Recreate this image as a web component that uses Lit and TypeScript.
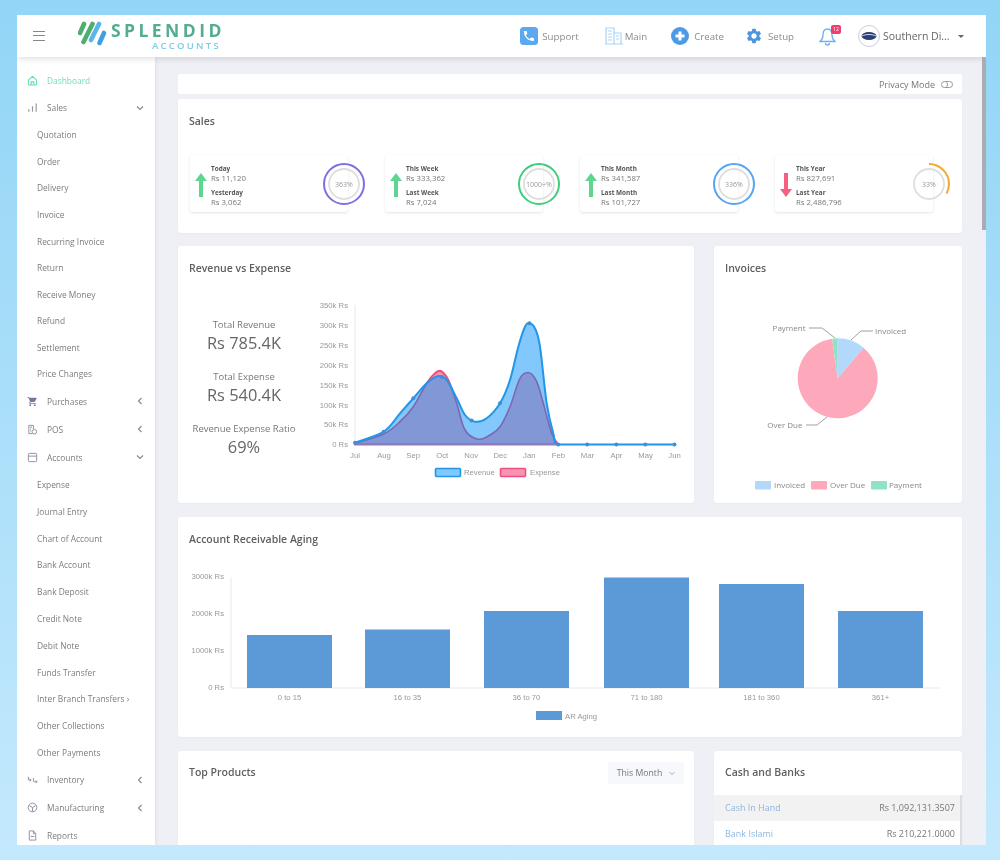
import { LitElement, html, css, svg } from "lit";
import { customElement } from "lit/decorators.js";

const ic = (body: unknown, cls = "sico", vb = "0 0 24 24") =>
  html`<svg class=${cls} viewBox=${vb}>${body}</svg>`;

const PHONE = "M6.62 10.79c1.44 2.83 3.76 5.14 6.59 6.59l2.2-2.2c.27-.27.67-.36 1.02-.24 1.12.37 2.33.57 3.57.57.55 0 1 .45 1 1V20c0 .55-.45 1-1 1-9.39 0-17-7.61-17-17 0-.55.45-1 1-1h3.5c.55 0 1 .45 1 1 0 1.25.2 2.45.57 3.57.11.35.03.74-.25 1.02l-2.2 2.2z";
const GEAR = "M19.14 12.94c.04-.3.06-.61.06-.94 0-.32-.02-.64-.07-.94l2.03-1.58c.18-.14.23-.41.12-.61l-1.92-3.32c-.12-.22-.37-.29-.59-.22l-2.39.96c-.5-.38-1.03-.7-1.62-.94l-.36-2.54c-.04-.24-.24-.41-.48-.41h-3.84c-.24 0-.43.17-.47.41l-.36 2.54c-.59.24-1.13.57-1.62.94l-2.39-.96c-.22-.08-.47 0-.59.22L2.74 8.87c-.12.21-.08.47.12.61l2.03 1.58c-.05.3-.09.63-.09.94s.02.64.07.94l-2.03 1.58c-.18.14-.23.41-.12.61l1.92 3.32c.12.22.37.29.59.22l2.39-.96c.5.38 1.03.7 1.62.94l.36 2.54c.05.24.24.41.48.41h3.84c.24 0 .44-.17.47-.41l.36-2.54c.59-.24 1.13-.56 1.62-.94l2.39.96c.22.08.47 0 .59-.22l1.92-3.32c.12-.22.07-.47-.12-.61l-2.01-1.58zM12 15.6c-1.98 0-3.6-1.62-3.6-3.6s1.62-3.6 3.6-3.6 3.6 1.62 3.6 3.6-1.62 3.6-3.6 3.6z";
const CART = "M7 18c-1.1 0-1.99.9-1.99 2S5.9 22 7 22s2-.9 2-2-.9-2-2-2zM1 2v2h2l3.6 7.59-1.35 2.45c-.16.28-.25.61-.25.96 0 1.1.9 2 2 2h12v-2H7.42c-.14 0-.25-.11-.25-.25l.03-.12.9-1.63h7.45c.75 0 1.41-.41 1.75-1.03l3.58-6.49c.08-.14.12-.31.12-.48 0-.55-.45-1-1-1H5.21l-.94-2H1zm16 16c-1.1 0-1.99.9-1.99 2s.89 2 1.99 2 2-.9 2-2-.9-2-2-2z";

const ICONS: Record<string, unknown> = {
  home: svg`<path d="M3 11 12 3l9 8v9a2 2 0 0 1-2 2H5a2 2 0 0 1-2-2z M9 22v-7h6v7" fill="none" stroke="#5fdcae" stroke-width="2.2" stroke-linejoin="round"/>`,
  bars: svg`<path d="M4 21v-5M12 21V9M20 21V3" fill="none" stroke="#999" stroke-width="2.6"/>`,
  cart: svg`<path d=${CART} fill="#77779a"/>`,
  pos: svg`<path d="M4 21V3h10v8M4 21h7M7 7h4M7 11h2M7 15h2" fill="none" stroke="#8a8a9c" stroke-width="2"/><circle cx="16" cy="17" r="5" fill="none" stroke="#8a8a9c" stroke-width="2"/>`,
  acc: svg`<rect x="3" y="3" width="18" height="18" rx="2" fill="none" stroke="#8a8a9c" stroke-width="2"/><path d="M3 9h18" stroke="#8a8a9c" stroke-width="2"/>`,
  inv: svg`<path d="M3 6v7h6M6 10l3 3-3 3M14 9v6a2 2 0 0 0 2 2h6M19 14l3 3-3 3" fill="none" stroke="#8a8a9c" stroke-width="2"/>`,
  man: svg`<circle cx="12" cy="12" r="9.5" fill="none" stroke="#8a8a9c" stroke-width="2"/><path d="M5 8l7 4 7-4M12 12v9" fill="none" stroke="#8a8a9c" stroke-width="2"/>`,
  rep: svg`<path d="M5 2h9l5 6v14H5z M14 2v6h5 M8 14h8" fill="none" stroke="#8a8a9c" stroke-width="2" stroke-linejoin="round"/>`,
};

type Row = { t: string; k: "top" | "sub" | "sub2"; i?: string; c?: "d" | "l" };
const MENU: Row[] = [
  { t: "Dashboard", k: "top", i: "home" },
  { t: "Sales", k: "top", i: "bars", c: "d" },
  ...["Quotation", "Order", "Delivery", "Invoice", "Recurring Invoice", "Return", "Receive Money", "Refund", "Settlement", "Price Changes"].map((t) => ({ t, k: "sub" as const })),
  { t: "Purchases", k: "top", i: "cart", c: "l" },
  { t: "POS", k: "top", i: "pos", c: "l" },
  { t: "Accounts", k: "top", i: "acc", c: "d" },
  ...["Expense", "Journal Entry", "Chart of Account", "Bank Account", "Bank Deposit", "Credit Note", "Debit Note", "Funds Transfer", "Inter Branch Transfers ›", "Other Collections", "Other Payments"].map((t) => ({ t, k: "sub2" as const })),
  { t: "Inventory", k: "top", i: "inv", c: "l" },
  { t: "Manufacturing", k: "top", i: "man", c: "l" },
  { t: "Reports", k: "top", i: "rep" },
];

const STATS = [
  { a: "Today", av: "Rs 11,120", b: "Yesterday", bv: "Rs 3,062", up: true, pct: "363%", col: "#7f6fe0", dash: 100 },
  { a: "This Week", av: "Rs 333,362", b: "Last Week", bv: "Rs 7,024", up: true, pct: "1000+%", col: "#3fce7c", dash: 100 },
  { a: "This Month", av: "Rs 341,587", b: "Last Month", bv: "Rs 101,727", up: true, pct: "336%", col: "#55a6f0", dash: 100 },
  { a: "This Year", av: "Rs 827,691", b: "Last Year", bv: "Rs 2,486,796", up: false, pct: "33%", col: "#f0a92e", dash: 33 },
];

const X0 = 355, XS = 29.05, Y0 = 444.4, YK = 139.4 / 350;
const MONTHS = ["Jul", "Aug", "Sep", "Oct", "Nov", "Dec", "Jan", "Feb", "Mar", "Apr", "May", "Jun"];

const REV_PTS = [[355,442.7],[383.7,431.7],[400,413.3],[413.3,398.3],[426.7,383.3],[438.3,376],[446.7,380],[456.7,398.3],[465,415],[475,421.7],[486.7,418.3],[500,403.3],[510,380],[518.3,346.7],[525,326.7],[529.3,323.3],[535,328.3],[540,346.7],[546.7,403.3],[553.3,433.3],[558.2,444.4],[587.2,444.4],[616.3,444.4],[645.3,444.4],[674.5,444.4]];
const EXP_PTS = [[355,443.3],[383.7,434],[400,421.7],[413.3,406.7],[426.7,383.3],[435,373.3],[440.7,371],[448.3,380],[456.7,403.3],[465,430],[478.3,439.3],[490,435],[500,426.7],[510,406.7],[520,378.3],[529.3,372.7],[536.7,381.7],[543.3,403.3],[551.7,433.3],[558.2,444.4]];
const REV_DOTS = [[355,442.7],[383.7,431.7],[413.3,398.3],[442,377],[471.6,420.5],[500,403.3],[529.3,323.3],[558.2,444.4],[587.2,444.4],[616.3,444.4],[645.3,444.4],[674.5,444.4]];

function curve(p: number[][]): string {
  let d = `M${p[0][0]} ${p[0][1]}`;
  for (let i = 0; i < p.length - 1; i++) {
    const a = p[Math.max(i - 1, 0)], b = p[i], c = p[i + 1], e = p[Math.min(i + 2, p.length - 1)];
    const y1 = Math.min(Y0, b[1] + (c[1] - a[1]) / 6);
    const y2 = Math.min(Y0, c[1] - (e[1] - b[1]) / 6);
    d += `C${b[0] + (c[0] - a[0]) / 6} ${y1} ${c[0] - (e[0] - b[0]) / 6} ${y2} ${c[0]} ${c[1]}`;
  }
  return d;
}
const closed = (p: number[][]) => `${curve(p)}L${p[p.length - 1][0]} ${Y0}L${p[0][0]} ${Y0}Z`;

function polar(a: number) {
  const r = (a * Math.PI) / 180;
  return `${837.7 + 40 * Math.sin(r)} ${378.3 - 40 * Math.cos(r)}`;
}
const slice = (a: number, b: number) =>
  `M837.7 378.3L${polar(a)}A40 40 0 ${b - a > 180 ? 1 : 0} 1 ${polar(b)}Z`;

const BARS = [
  { x: 247, top: 635, l: "0 to 15" },
  { x: 365, top: 629.5, l: "16 to 35" },
  { x: 484, top: 611, l: "36 to 70" },
  { x: 604, top: 577.5, l: "71 to 180" },
  { x: 719, top: 584, l: "181 to 360" },
  { x: 838, top: 611, l: "361+" },
];

@customElement("app-root")
export class AppRoot extends LitElement {
  static styles = css`
    :host { display: block; width: 1000px; height: 860px; overflow: hidden; background: linear-gradient(180deg, #92d5f6 0%, #c4e9fd 100%); font-family: "Open Sans", sans-serif; }
    .page { padding: 15px 14px 15px 17px; height: 830px; }
    .win { position: relative; width: 969px; height: 830px; background: #eef0f6; overflow: hidden; filter: blur(0.55px); }
    .hdr { height: 42px; background: #fff; display: flex; align-items: center; box-shadow: 0 2px 6px rgba(0,0,0,.12); position: relative; z-index: 2; padding-left: 16px; }
    .burger { width: 12px; height: 10px; border-top: 1.3px solid #888; border-bottom: 1.3px solid #888; position: relative; box-sizing: border-box; margin-right: 33px; }
    .burger::after { content: ""; position: absolute; left: 0; right: 0; top: 3px; height: 1.3px; background: #888; }
    .logo { display: flex; align-items: flex-start; height: 42px; }
    .mark { width: 30px; height: 28px; margin-top: 6px; }
    .wm { margin-left: 3px; width: 110px; }
    .w1 { font: 700 17.5px/20px "Open Sans", sans-serif; letter-spacing: 3.45px; color: #54ad90; margin-top: 5px; white-space: nowrap; height: 20px; width: 110px; }
    .w2 { font: 600 9.5px/10px "Open Sans", sans-serif; letter-spacing: 2.25px; color: #7ccbea; margin: 1px 0 0 41px; white-space: nowrap; }
    .nav { margin-left: auto; display: flex; align-items: center; padding-right: 22px; }
    .ni { display: flex; align-items: center; font-size: 9.7px; color: #8b8b8b; }
    .ni svg { width: 18px; height: 18px; display: block; }
    .n1 { gap: 4px; margin-right: 26px; }
    .n2 { gap: 2px; margin-right: 24px; }
    .n3 { gap: 5px; margin-right: 21px; }
    .n4 { gap: 5px; margin-right: 25px; }
    .bell { position: relative; width: 22px; height: 22px; margin-right: 17px; }
    .bell svg { width: 17px; height: 19px; margin-top: 2px; display: block; }
    .bdg { position: absolute; left: 12px; top: 0; width: 10px; height: 9px; background: #ef3f6e; border-radius: 2px; color: #fff; font-size: 5px; line-height: 9px; text-align: center; }
    .av { width: 22px; height: 22px; border-radius: 50%; border: 1px solid #ccd; box-sizing: border-box; margin-right: 3px; display: flex; align-items: center; justify-content: center; }
    .av svg { width: 16px; height: 10px; }
    .co { font-size: 10.5px; color: #666; width: 75px; white-space: nowrap; }
    .car { width: 0; height: 0; border-left: 3px solid transparent; border-right: 3px solid transparent; border-top: 3px solid #666; }
    .body { display: flex; height: 788px; }
    .side { width: 138px; flex: none; background: #fff; padding-top: 10px; box-shadow: 1px 0 4px rgba(0,0,0,.07); overflow: hidden; box-sizing: border-box; }
    .r { display: flex; align-items: center; font-size: 8.4px; color: #7c7c7c; white-space: nowrap; position: relative; }
    .top { height: 28px; padding-left: 10px; }
    .top:first-child { height: 26.6px; color: #6fe0b6; }
    .sub { height: 26.55px; padding-left: 20px; }
    .sub2 { height: 26.8px; padding-left: 20px; }
    .sico { width: 11px; height: 11px; margin-right: 9px; flex: none; }
    .chev { position: absolute; left: 119px; width: 8px; height: 8px; }
    .main { flex: 1; padding: 17px 24px 0 23px; min-width: 0; }
    .priv { height: 20px; background: #fff; display: flex; align-items: center; justify-content: flex-end; padding-right: 9px; font-size: 9px; color: #777; gap: 6px; margin-bottom: 5px; border-radius: 2px; }
    .tog { width: 12px; height: 7px; border: 1px solid #999; border-radius: 4px; box-sizing: border-box; position: relative; }
    .tog::after { content: ""; position: absolute; left: 0; top: 0; width: 5px; height: 5px; border-right: 1px solid #999; border-radius: 50%; }
    .card { background: #fff; border-radius: 3px; box-shadow: 0 1px 2px rgba(60,70,110,.04); }
    .ch { height: 44px; display: flex; align-items: center; padding: 0 11px; font-size: 10.5px; font-weight: 600; color: #5f5f5f; box-sizing: border-box; justify-content: space-between; }
    .ch.up { padding-bottom: 2px; }
    .sales { height: 134px; margin-bottom: 13px; }
    .stats { display: grid; grid-template-columns: repeat(4, 195px); padding: 12px 0 0 11.5px; }
    .st { position: relative; width: 158px; height: 57px; border-radius: 3px; box-shadow: 0 1px 3px rgba(0,0,0,.11); display: flex; box-sizing: border-box; padding-left: 5px; }
    .arr { width: 12px; height: 24px; margin: 18px 4.5px 0 0; flex: none; }
    .tx { padding-top: 9px; font-size: 7.8px; line-height: 9.5px; color: #777; }
    .tx b { display: block; font-size: 6.4px; font-weight: 700; color: #555; }
    .tx span { display: block; margin-bottom: 5px; white-space: nowrap; }
    .ring { position: absolute; right: -18.5px; top: 6.5px; width: 44px; height: 44px; }
    .ring text { font: 7px "Open Sans", sans-serif; fill: #999; text-anchor: middle; dominant-baseline: central; }
    .row2 { display: flex; gap: 20px; }
    .rev { width: 516px; height: 257px; margin-bottom: 14px; flex: none; }
    .invc { width: 248px; height: 257px; flex: none; }
    .invc svg, .aging svg, .rb svg { display: block; }
    .rb { display: flex; }
    .kpi { width: 132px; flex: none; text-align: center; padding-top: 28px; box-sizing: border-box; color: #777; font-size: 9.5px; line-height: 14px; }
    .kpi .lg { font-size: 16.4px; line-height: 22px; color: #666; margin-bottom: 16px; }
    .kpi .n { white-space: nowrap; }
    .aging { height: 220px; margin-bottom: 14px; }
    .tp { width: 516px; height: 200px; flex: none; }
    .cash { width: 248px; height: 200px; flex: none; position: relative; font-size: 9px; }
    .dd { width: 76px; height: 22px; background: #f7f8fb; border-radius: 3px; display: flex; align-items: center; justify-content: center; gap: 7px; font-size: 8.7px; font-weight: 400; color: #777; margin: 2px -1px 0 0; }
    .dd svg { width: 6px; height: 6px; }
    .cr { height: 25.7px; display: flex; align-items: center; justify-content: space-between; padding: 0 7px 0 11px; color: #777; }
    .cr.g { background: #f2f2f2; }
    .cr a { color: #8fb6de; }
    .sb2 { position: absolute; right: 0; top: 44px; width: 2px; height: 60px; background: #dcdcdc; }
    .sb { position: absolute; right: 0; top: 42px; width: 4px; height: 173px; background: #a9adb2; z-index: 3; }
    svg text { font: 7.7px "Liberation Sans", sans-serif; fill: #999; }
    svg text.e { text-anchor: end; }
    svg text.m { text-anchor: middle; }
    svg text.os { font: 8px "Open Sans", sans-serif; fill: #888; }
  `;

  private top(r: Row) {
    return html`<div class="r top">
      ${ic(ICONS[r.i!])}${r.t}
      ${r.c === "d" ? html`<svg class="chev" viewBox="0 0 8 8"><path d="M1 2.5 4 5.5 7 2.5" fill="none" stroke="#888" stroke-width="1.1"/></svg>` : ""}
      ${r.c === "l" ? html`<svg class="chev" viewBox="0 0 8 8"><path d="M5.5 1 2.5 4 5.5 7" fill="none" stroke="#888" stroke-width="1.1"/></svg>` : ""}
    </div>`;
  }

  private revenueChart() {
    const ticks = [0, 50, 100, 150, 200, 250, 300, 350];
    return html`<svg width="384" height="200" viewBox="310 290 384 200">
      <defs><clipPath id="rc"><path d=${closed(REV_PTS)} /></clipPath></defs>
      <path d="M355 305V444.4H675" fill="none" stroke="#e8e9ee" />
      ${ticks.map((k) => svg`<text class="e" x="348" y=${Y0 - k * YK + 3}>${k === 0 ? "0" : k + "k"} Rs</text>`)}
      ${MONTHS.map((m, i) => svg`<text class="m" x=${X0 + i * XS} y="457.5">${m}</text>`)}
      <path d=${closed(EXP_PTS)} fill="#f695b2" stroke="#ee4f7c" stroke-width="2" />
      <path d=${closed(REV_PTS)} fill="#83c8fc" />
      <g clip-path="url(#rc)"><path d=${closed(EXP_PTS)} fill="#8197d6" stroke="#7d68b0" stroke-width="1.6" /></g>
      <path d=${curve(REV_PTS)} fill="none" stroke="#2196e8" stroke-width="2" />
      ${REV_DOTS.map(([x, y]) => svg`<circle cx=${x} cy=${y} r="2" fill="#3d8fdc" />`)}
      <rect x="435.5" y="468.5" width="25" height="8" rx="1" fill="#83c8fc" stroke="#2196e8" stroke-width="1.6" />
      <text x="464" y="475">Revenue</text>
      <rect x="500.5" y="468.5" width="25" height="8" rx="1" fill="#f695b2" stroke="#ee4f7c" stroke-width="1.6" />
      <text x="530" y="475">Expense</text>
    </svg>`;
  }

  private pie() {
    return html`<svg width="248" height="213" viewBox="714 290 248 213">
      <path d=${slice(40, 352)} fill="#fda9bb" />
      <path d=${slice(0, 40)} fill="#b2d8fb" />
      <path d=${slice(352, 360)} fill="#8fe3c5" />
      <path d="M851 340 861 331H873M809 328H822L835 338M806 425H817L827 417" fill="none" stroke="#888" stroke-width=".8" />
      <text class="os" x="875" y="334">Invoiced</text>
      <text class="os e" x="805.5" y="331">Payment</text>
      <text class="os e" x="802.5" y="428">Over Due</text>
      <rect x="755" y="481" width="16" height="8.5" rx="1" fill="#b2d8fb" />
      <text class="os" x="774" y="487.5">Invoiced</text>
      <rect x="811" y="481" width="16" height="8.5" rx="1" fill="#fda9bb" />
      <text class="os" x="830" y="487.5">Over Due</text>
      <rect x="871" y="481" width="16" height="8.5" rx="1" fill="#8fe3c5" />
      <text class="os" x="889" y="487.5">Payment</text>
    </svg>`;
  }

  private aging() {
    return html`<svg width="784" height="176" viewBox="178 561 784 176">
      <path d="M231 577V688H940" fill="none" stroke="#e8e9ee" />
      ${[[0, 688], [1000, 651], [2000, 614], [3000, 577]].map(([k, y]) => svg`<text class="e" x="224" y=${y + 2}>${k === 0 ? "0" : k + "k"} Rs</text>`)}
      ${BARS.map((b) => svg`
        <rect x=${b.x} y=${b.top} width="85" height=${688 - b.top} fill="#5b9ad6" />
        <text class="m" x=${b.x + 42.5} y="700">${b.l}</text>`)}
      <rect x="536" y="711" width="26" height="9" fill="#5b9ad6" />
      <text x="565" y="719">AR Aging</text>
    </svg>`;
  }

  render() {
    return html`<div class="page"><div class="win">
      <div class="hdr">
        <div class="burger"></div>
        <div class="logo">
          <svg class="mark" viewBox="0 0 30 28">
            <g fill="none" stroke-width="4.6" stroke-linecap="round">
              <path d="M6 3 2 12" stroke="#4caf6e" />
              <path d="M14.5 3 5.5 21" stroke="#4caf6e" />
              <path d="M21 3 13 19" stroke="#5ab5e8" />
              <path d="M26 12 21.5 22" stroke="#3f9fe0" />
            </g>
          </svg>
          <div class="wm"><div class="w1">SPLENDID</div><div class="w2">ACCOUNTS</div></div>
        </div>
        <div class="nav">
          <div class="ni n1"><svg viewBox="0 0 18 18"><rect width="18" height="18" rx="3.5" fill="#5aa9ef"/><g transform="translate(2.2 2.2) scale(.56)"><path d=${PHONE} fill="#fff"/></g></svg>Support</div>
          <div class="ni n2"><svg viewBox="0 0 18 18"><path d="M1 17V1h8v16M9 6h7v11M0 17h18M3 4h4M3 7h4M3 10h4M3 13h4M11 9h3M11 12h3" fill="none" stroke="#a9d3f5" stroke-width="1.2"/></svg>Main</div>
          <div class="ni n3"><svg viewBox="0 0 18 18"><circle cx="9" cy="9" r="9" fill="#4d9be6"/><path d="M9 4.5v9M4.5 9h9" stroke="#fff" stroke-width="3"/></svg>Create</div>
          <div class="ni n4"><svg viewBox="0 0 24 24"><path d=${GEAR} fill="#4d95dc"/></svg>Setup</div>
          <div class="bell"><svg viewBox="0 0 17 19"><path d="M8.5 2C5 2 4 5 4 8c0 3-1 5-3 6.5h15c-2-1.5-3-3.5-3-6.5 0-3-1-6-4.5-6zM6.5 16a2 2 0 0 0 4 0" fill="none" stroke="#6db2ee" stroke-width="1.3"/></svg><div class="bdg">12</div></div>
          <div class="av"><svg viewBox="0 0 16 10"><ellipse cx="8" cy="5" rx="7.5" ry="4" fill="#2c3f78"/><path d="M1 5c4-2 10-2 14 0" stroke="#d9dff0" stroke-width="1" fill="none"/></svg></div>
          <div class="co">Southern Di...</div>
          <div class="car"></div>
        </div>
      </div>
      <div class="sb"></div>
      <div class="body">
        <div class="side">
          ${MENU.map((r) => r.k === "top" ? this.top(r) : html`<div class="r ${r.k}">${r.t}</div>`)}
        </div>
        <div class="main">
          <div class="priv">Privacy Mode<div class="tog"></div></div>
          <div class="card sales">
            <div class="ch">Sales</div>
            <div class="stats">
              ${STATS.map((s) => html`<div class="st">
                <svg class="arr" viewBox="0 0 12 24">
                  ${s.up
                    ? svg`<path d="M6 0 12 8H8V24H4V8H0Z" fill="#5fd68f"/>`
                    : svg`<path d="M6 24 12 16H8V0H4V16H0Z" fill="#f55f80"/>`}
                </svg>
                <div class="tx"><b>${s.a}</b><span>${s.av}</span><b>${s.b}</b><span>${s.bv}</span></div>
                <svg class="ring" viewBox="0 0 44 44">
                  <circle cx="22" cy="22" r="15" fill="none" stroke="#dedede" stroke-width="1.8"/>
                  <circle cx="22" cy="22" r="20" fill="none" stroke=${s.col} stroke-width="2" pathLength="100" stroke-dasharray="${s.dash} 100" transform="rotate(-90 22 22)"/>
                  <text x="22" y="22">${s.pct}</text>
                </svg>
              </div>`)}
            </div>
          </div>
          <div class="row2">
            <div class="card rev">
              <div class="ch">Revenue vs Expense</div>
              <div class="rb">
                <div class="kpi">
                  <div class="n">Total Revenue</div><div class="lg">Rs 785.4K</div>
                  <div class="n">Total Expense</div><div class="lg">Rs 540.4K</div>
                  <div class="n">Revenue Expense Ratio</div><div class="lg">69%</div>
                </div>
                ${this.revenueChart()}
              </div>
            </div>
            <div class="card invc"><div class="ch">Invoices</div>${this.pie()}</div>
          </div>
          <div class="card aging"><div class="ch">Account Receivable Aging</div>${this.aging()}</div>
          <div class="row2">
            <div class="card tp"><div class="ch up">Top Products<div class="dd">This Month<svg viewBox="0 0 6 6"><path d="M.5 2 3 4.5 5.5 2" fill="none" stroke="#999" stroke-width=".8"/></svg></div></div></div>
            <div class="card cash">
              <div class="ch up">Cash and Banks</div>
              <div class="cr g"><a>Cash In Hand</a><span>Rs 1,092,131.3507</span></div>
              <div class="cr"><a>Bank Islami</a><span>Rs 210,221.0000</span></div>
              <div class="sb2"></div>
            </div>
          </div>
        </div>
      </div>
    </div></div>`;
  }
}
